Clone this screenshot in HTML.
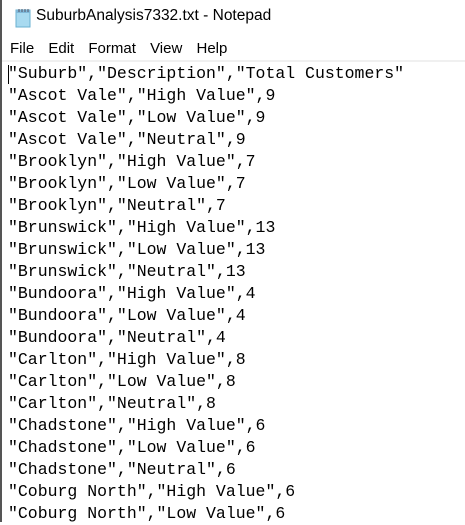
<!DOCTYPE html>
<html><head><style>
body{margin:0;width:465px;height:522px;overflow:hidden;background:#fff;position:relative}
.lb{position:absolute;left:0;top:0;width:2px;height:522px;background:#555}
.title{position:absolute;left:36px;top:7px;font:15.5px "Liberation Sans",sans-serif;color:#000}
.menu{position:absolute;left:10px;top:40px;font:15px "Liberation Sans",sans-serif;color:#000}
.menu span{margin-right:10px}
.sep{position:absolute;left:2px;right:0;top:60px;height:2px;background:#f0f0f0}
pre{position:absolute;left:8px;top:63px;margin:0;font:16.5px/22px "Liberation Mono",monospace;color:#000}
.caret{position:absolute;left:8px;top:65px;width:1px;height:19px;background:#000}
</style></head><body>
<div class="lb"></div>
<svg style="position:absolute;left:14px;top:8px" width="18" height="20" viewBox="0 0 18 20">
<rect x="2" y="2" width="14" height="17" fill="#a8daf0" stroke="#6ab0d0"/>
<rect x="2" y="2" width="14" height="3" fill="#7fb8d8"/>
<path d="M5 1 v3 M8 1 v3 M11 1 v3 M14 1 v3" stroke="#556" stroke-width="1"/>
</svg>
<div class="title">SuburbAnalysis7332.txt - Notepad</div>
<div class="menu"><span>File</span> <span>Edit</span> <span>Format</span> <span>View</span> <span>Help</span></div>
<div class="sep"></div>
<div class="caret"></div>
<pre>"Suburb","Description","Total Customers"
"Ascot Vale","High Value",9
"Ascot Vale","Low Value",9
"Ascot Vale","Neutral",9
"Brooklyn","High Value",7
"Brooklyn","Low Value",7
"Brooklyn","Neutral",7
"Brunswick","High Value",13
"Brunswick","Low Value",13
"Brunswick","Neutral",13
"Bundoora","High Value",4
"Bundoora","Low Value",4
"Bundoora","Neutral",4
"Carlton","High Value",8
"Carlton","Low Value",8
"Carlton","Neutral",8
"Chadstone","High Value",6
"Chadstone","Low Value",6
"Chadstone","Neutral",6
"Coburg North","High Value",6
"Coburg North","Low Value",6</pre>
</body></html>
